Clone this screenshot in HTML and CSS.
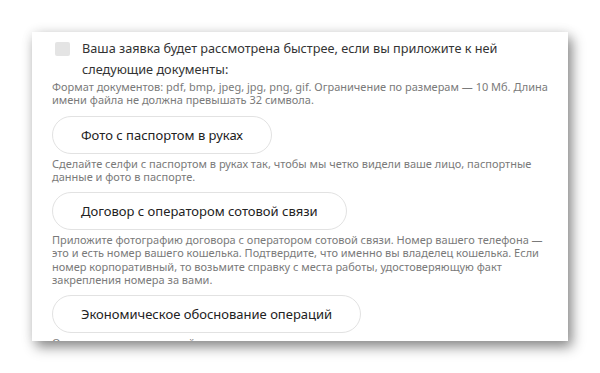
FILE: index.html
```html
<!DOCTYPE html>
<html lang="ru">

<head>
    <meta charset="UTF-8" />
    <meta name="viewport" content="width=device-width, initial-scale=1.0" />
    <title>Документы</title>
    <link rel="stylesheet" href="styles.css">
</head>

<body>
    <div class="page">
        <div class="card">
            <label class="check">
                <span class="check-box"></span>
                <span class="check-text">Ваша заявка будет рассмотрена быстрее, если вы приложите к ней следующие документы:</span>
            </label>
            <p class="hint">Формат документов: pdf, bmp, jpeg, jpg, png, gif. Ограничение по размерам — 10 Мб. Длина имени файла не должна превышать 32 символа.</p>

            <div class="doc">
                <button class="btn">Фото с паспортом в руках</button>
                <p class="hint">Сделайте селфи с паспортом в руках так, чтобы мы четко видели ваше лицо, паспортные данные и фото в паспорте.</p>
            </div>

            <div class="doc">
                <button class="btn">Договор с оператором сотовой связи</button>
                <p class="hint">Приложите фотографию договора с оператором сотовой связи. Номер вашего телефона — это и есть номер вашего кошелька. Подтвердите, что именно вы владелец кошелька. Если номер корпоративный, то возьмите справку с места работы, удостоверяющую факт закрепления номера за вами.</p>
            </div>

            <div class="doc">
                <button class="btn">Экономическое обоснование операций</button>
                <p class="hint">Опишите, для каких целей вы используете кошелек и откуда поступают средства.</p>
            </div>
        </div>
    </div>
</body>

</html>
```

FILE: styles.css
```css
* {
    margin: 0;
    padding: 0;
    box-sizing: border-box;
    font-family: 'Noto Sans', sans-serif;
}

body {
    background: #fff;
    color: #333;
}

.page {
    height: 373px;
    overflow: hidden;
    padding: 32px 32px 0;
}

.card {
    width: 536px;
    height: 309px;
    overflow: hidden;
    background: #fff;
    padding: 6px 20px 0;
    box-shadow: 4px 6px 12px rgba(0, 0, 0, 0.45),
        0 0 12px rgba(0, 0, 0, 0.07);
}

.check {
    display: flex;
    gap: 12px;
}

.check-box {
    flex: none;
    width: 15px;
    height: 14px;
    margin: 4px 0 0 3px;
    border-radius: 2px;
    background: #e4e4e4;
}

.check-text {
    font-size: 12.7px;
    line-height: 21px;
    color: #333;
}

.hint {
    font-size: 11px;
    line-height: 13.3px;
    color: #7a7a7a;
}

.doc {
    margin-top: 9px;
}

.btn {
    display: block;
    height: 38px;
    padding: 0 28px;
    border: 1px solid #e2e2e2;
    border-radius: 19px;
    background: #fff;
    color: #222;
    font-size: 13px;
    cursor: pointer;
}

.doc .hint {
    margin-top: 3px;
}
```
